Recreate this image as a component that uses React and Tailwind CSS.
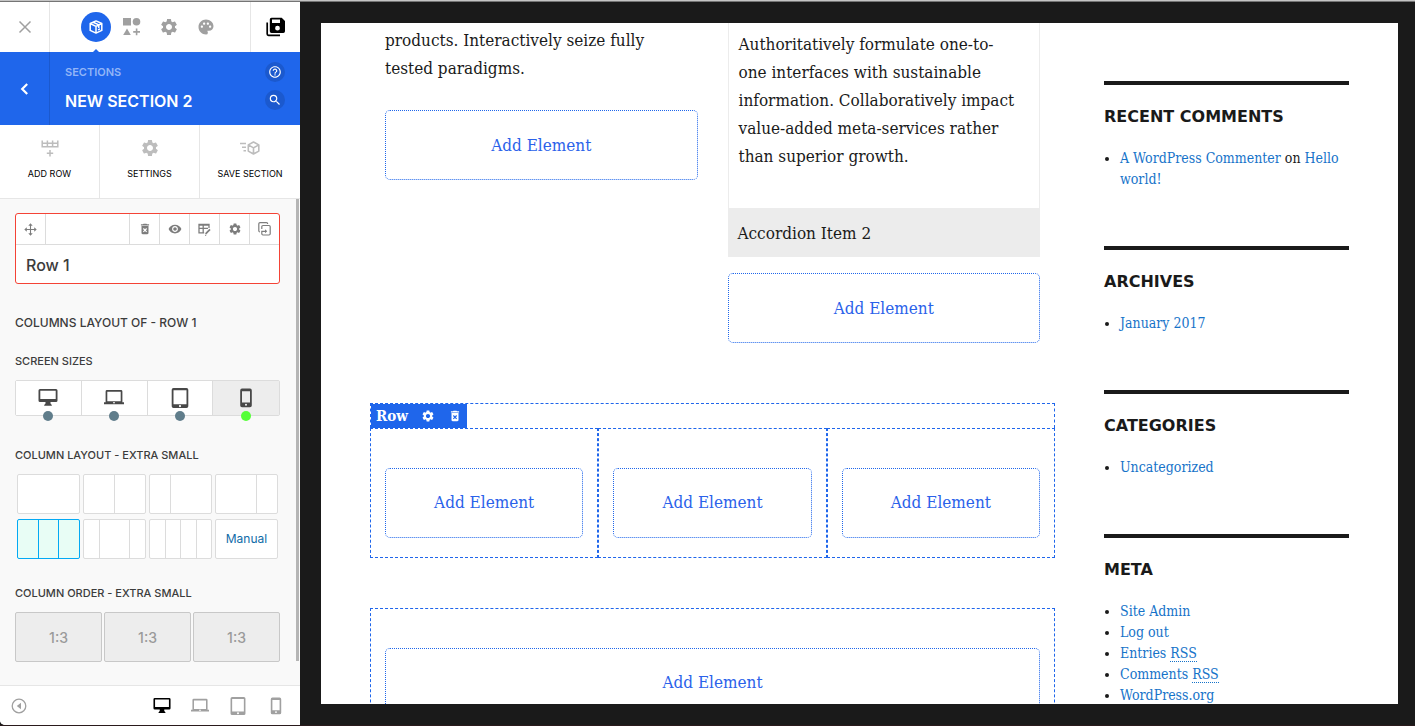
import React from "react";
import {
  MdSettings,
  MdPalette,
  MdDeleteForever,
  MdVisibility,
  MdHelpOutline,
  MdSearch,
} from "react-icons/md";

const serif = "font-['DejaVu_Serif_Condensed','DejaVu_Serif',serif]";

function CloseIcon() {
  return (
    <svg width="14" height="14" viewBox="0 0 14 14" fill="none" stroke="currentColor" strokeWidth="1.5" aria-hidden="true">
      <path d="M1.5 1.5l11 11M12.5 1.5l-11 11" />
    </svg>
  );
}

function CubeIcon() {
  return (
    <svg width="14" height="14" viewBox="0 0 14 14" fill="none" stroke="currentColor" strokeWidth="1.500" strokeLinejoin="round" aria-hidden="true">
      <path d="M7 .9l5.800 2.600v6.900L7 13.100 1.200 10.400V3.500zM1.200 3.500L7 6.400l5.800-2.900M7 6.400v6.700M4.200 2.200l5.600 2.700M9.800 4.900v3" />
      <path d="M9 9.800l2-1" />
    </svg>
  );
}

function ElementsIcon() {
  return (
    <svg width="18" height="18" viewBox="0 0 18 18" fill="currentColor" aria-hidden="true">
      <rect x="0" y="0" width="8" height="7.500" />
      <circle cx="13.500" cy="3.800" r="3.800" />
      <path d="M4 10.500L7.800 17H.2z" />
      <path d="M12.800 10.500h1.600v2.600H17v1.600h-2.600v2.600h-1.600v-2.600h-2.600v-1.600h2.600z" />
    </svg>
  );
}

function SaveAllIcon() {
  return (
    <svg width="20" height="20" viewBox="0 0 20 20" aria-hidden="true">
      <path d="M1.200 5.500V17a1.300 1.300 0 0 0 1.300 1.300H14" fill="none" stroke="currentColor" strokeWidth="1.700" />
      <path fillRule="evenodd" fill="currentColor" d="M5.500.7h10.200L19 4v10.200a1.700 1.700 0 0 1-1.700 1.700H5.500a1.700 1.700 0 0 1-1.700-1.700V2.400A1.700 1.700 0 0 1 5.500.7zM6 2.500v3.400h8V2.500zM11.500 8.800a2.400 2.400 0 1 0 0 4.800 2.400 2.400 0 0 0 0-4.800z" />
    </svg>
  );
}

function ChevronIcon() {
  return (
    <svg width="10" height="12" viewBox="0 0 10 12" fill="none" stroke="currentColor" strokeWidth="2.200" aria-hidden="true">
      <path d="M7.200 1L2.200 6l5 5" />
    </svg>
  );
}

function AddRowIcon() {
  return (
    <svg width="18" height="17" viewBox="0 0 18 17" fill="none" stroke="currentColor" strokeWidth="1.500" aria-hidden="true">
      <path d="M1.200.5v6.300h15.600V.5M1.200 3.300h15.600M6.400.5v6.300M11.600.5v6.300M9 10v6.500M5.800 13.200h6.400" />
    </svg>
  );
}

function SaveSectionIcon() {
  return (
    <svg width="20" height="14" viewBox="0 0 20 14" fill="none" stroke="currentColor" strokeWidth="1.600" aria-hidden="true">
      <path d="M0 2.500h6M2 6.200h4M3.500 9.800h2.500" />
      <path strokeLinejoin="round" d="M13.500 1l5.300 2.900v6.200L13.500 13l-5.200-2.900V3.900zM8.300 3.900l5.200 3 5.300-3M13.500 6.900V13" />
    </svg>
  );
}

function MoveIcon() {
  return (
    <svg width="13" height="13" viewBox="0 0 13 13" aria-hidden="true">
      <path d="M6.500 2v9M2 6.500h9" stroke="currentColor" strokeWidth="1.100" />
      <path d="M6.500.3l2.200 2.500H4.300zM6.500 12.700l2.200-2.500H4.300zM.3 6.500l2.500-2.200v4.400zM12.700 6.500l-2.500-2.200v4.400z" fill="currentColor" />
    </svg>
  );
}

function TableEditIcon() {
  return (
    <svg width="13" height="13" viewBox="0 0 13 13" fill="none" stroke="currentColor" strokeWidth="1.300" aria-hidden="true">
      <path d="M11 5V1.500H1v8.400h5.200M1 5.300h9M5.200 2v7.900M1 2.200h10" />
      <path d="M12 6.400l-4.400 4.500" strokeWidth="1.700" />
      <path d="M7 12.300h1.200" strokeWidth="1.100" />
    </svg>
  );
}

function CopyIcon() {
  return (
    <svg width="13" height="14" viewBox="0 0 13 14" fill="none" stroke="currentColor" strokeWidth="1.200" aria-hidden="true">
      <path d="M2 10a1.200 1.200 0 0 1-1.200-1.200V1.800A1.200 1.200 0 0 1 2 .7h6.500a1.200 1.200 0 0 1 1.200 1.200" />
      <path d="M3.800 7V4.700A1.200 1.200 0 0 1 5 3.500h6a1.200 1.200 0 0 1 1.200 1.200v7.100A1.200 1.200 0 0 1 11 13H5a1.200 1.200 0 0 1-1.200-1.200V9.300h4.400" />
      <path d="M7 7.300l2.200 2-2.200 2z" fill="currentColor" stroke="none" />
    </svg>
  );
}

function DesktopIcon({ size }) {
  return (
    <svg width={size} height={size} viewBox="0 0 20 20" fill="currentColor" aria-hidden="true">
      <path fillRule="evenodd" d="M2 1h16a1.500 1.500 0 0 1 1.500 1.500v10A1.500 1.500 0 0 1 18 14h-5.500v1.500l1.300 1.500v.8H6.200V17l1.300-1.500V14H2A1.500 1.500 0 0 1 .5 12.500v-10A1.500 1.500 0 0 1 2 1zM2.300 2.800v8.200h15.400V2.800z" />
    </svg>
  );
}

function LaptopIcon({ size }) {
  return (
    <svg width={size} height={size} viewBox="0 0 20 20" fill="currentColor" aria-hidden="true">
      <path fillRule="evenodd" d="M3 2h14a1.400 1.400 0 0 1 1.400 1.400v10.800H20v2H0v-2h1.600V3.400A1.400 1.400 0 0 1 3 2zM3.300 3.800v9.400h13.400V3.800zM9 14.300v1h2v-1z" />
    </svg>
  );
}

function TabletIcon({ size }) {
  return (
    <svg width={size} height={size} viewBox="0 0 20 20" fill="currentColor" aria-hidden="true">
      <path fillRule="evenodd" d="M3.500 0h13A1.800 1.800 0 0 1 18.300 1.800v16.400a1.800 1.800 0 0 1-1.800 1.800h-13a1.800 1.800 0 0 1-1.800-1.800V1.800A1.800 1.800 0 0 1 3.500 0zM3.500 2.200v14h13v-14zM10 17a1.100 1.100 0 1 0 0 2.200A1.100 1.100 0 0 0 10 17z" />
    </svg>
  );
}

function PhoneIcon({ size }) {
  return (
    <svg width={size} height={size} viewBox="0 0 20 20" fill="currentColor" aria-hidden="true">
      <path fillRule="evenodd" d="M6 .6h8a1.800 1.800 0 0 1 1.800 1.800v15a1.800 1.800 0 0 1-1.800 1.800H6a1.800 1.800 0 0 1-1.800-1.800v-15A1.800 1.800 0 0 1 6 .6zM6 3.300v11.300h8V3.300zM10 15.700a1 1 0 1 0 0 2.100 1 1 0 0 0 0-2.100z" />
    </svg>
  );
}

function CollapseIcon() {
  return (
    <svg width="16" height="16" viewBox="0 0 16 16" aria-hidden="true">
      <circle cx="8" cy="8" r="6.800" fill="none" stroke="currentColor" strokeWidth="1.300" />
      <path d="M10 4.800v6.400L5.800 8z" fill="currentColor" />
    </svg>
  );
}

const screens = [
  { name: "Desktop", Icon: DesktopIcon },
  { name: "Laptop", Icon: LaptopIcon },
  { name: "Tablet", Icon: TabletIcon },
  { name: "Phone", Icon: PhoneIcon },
];

const layouts = [
  { name: "One column", cells: [1] },
  { name: "Two columns", cells: [1, 1] },
  { name: "One third, two thirds", cells: [1, 2] },
  { name: "Two thirds, one third", cells: [2, 1] },
  { name: "Three columns", cells: [1, 1, 1], active: true },
  { name: "Quarter, half, quarter", cells: [1, 2, 1] },
  { name: "Four columns", cells: [1, 1, 1, 1] },
];

function SectionLabel({ children }) {
  return <h3 className="text-[11px] font-medium leading-4 text-[#3c3c3c]">{children}</h3>;
}

function TopBar() {
  return (
    <header className="flex h-[50px] shrink-0 items-stretch bg-white text-[#a0a0a0]">
      <button aria-label="Close" className="flex w-[50px] items-center justify-center border-r border-[#e6e6e6]">
        <CloseIcon />
      </button>
      <nav className="flex flex-1 items-center gap-3 pl-[31px]">
        <button aria-label="Sections" className="relative flex h-[30px] w-[30px] items-center justify-center rounded-full bg-[#1f66eb] text-white">
          <CubeIcon />
          <span className="absolute left-[12px] top-[37px] h-0 w-0 border-x-[3px] border-b-[3px] border-x-transparent border-b-[#1f66eb]" />
        </button>
        <div className="flex items-center gap-[18px]">
          <button aria-label="Elements"><ElementsIcon /></button>
          <button aria-label="Settings"><MdSettings size={20} /></button>
          <button aria-label="Styles"><MdPalette size={18} /></button>
        </div>
      </nav>
      <button aria-label="Save" className="flex w-[50px] items-center justify-center border-l border-[#e6e6e6] text-black">
        <SaveAllIcon />
      </button>
    </header>
  );
}

function TitleBar() {
  return (
    <div className="flex h-[73px] shrink-0 bg-[#1f66eb] text-white">
      <button aria-label="Back" className="flex w-[50px] items-center justify-center border-r border-[#1b59ce]">
        <ChevronIcon />
      </button>
      <div className="flex flex-1 flex-col pl-[15px] pt-3">
        <p className="text-[11px] font-semibold leading-4 text-[#93b5f7]">SECTIONS</p>
        <h2 className="mt-[9px] text-[16px] font-semibold leading-6">NEW SECTION 2</h2>
      </div>
      <div className="flex w-[50px] flex-col items-center gap-2 pt-[10px]">
        <button aria-label="Help" className="flex h-5 w-5 items-center justify-center rounded-full bg-[#1b59ce]">
          <MdHelpOutline size={14} />
        </button>
        <button aria-label="Search" className="flex h-5 w-5 items-center justify-center rounded-full bg-[#1b59ce]">
          <MdSearch size={14} />
        </button>
      </div>
    </div>
  );
}

function Actions() {
  const items = [
    { name: "ADD ROW", icon: <AddRowIcon /> },
    { name: "SETTINGS", icon: <MdSettings size={20} /> },
    { name: "SAVE SECTION", icon: <SaveSectionIcon /> },
  ];
  return (
    <div className="grid h-[74px] shrink-0 grid-cols-3 divide-x divide-[#e6e6e6] border-b border-[#e6e6e6] bg-white">
      {items.map((item) => (
        <button key={item.name} className="flex flex-col items-center pt-[13px] text-[#bdbdbd]">
          <span className="flex h-5 items-center">{item.icon}</span>
          <span className="mt-2 whitespace-nowrap text-[9px] leading-4 text-black">{item.name}</span>
        </button>
      ))}
    </div>
  );
}

function RowCard() {
  const tools = [
    { name: "Delete row", icon: <MdDeleteForever size={14} /> },
    { name: "Toggle visibility", icon: <MdVisibility size={14} /> },
    { name: "Edit layout", icon: <TableEditIcon /> },
    { name: "Row settings", icon: <MdSettings size={14} /> },
    { name: "Duplicate row", icon: <CopyIcon /> },
  ];
  return (
    <div className="overflow-hidden rounded-[3px] border border-[#f44336] bg-white text-[#7d7d7d]">
      <div className="flex h-[31px] items-stretch border-b border-[#dcdcdc]">
        <button aria-label="Move row" className="flex w-[30px] items-center justify-center border-r border-[#dcdcdc]">
          <MoveIcon />
        </button>
        <div className="flex-1" />
        {tools.map((tool) => (
          <button key={tool.name} aria-label={tool.name} className="flex w-[30px] items-center justify-center border-l border-[#dcdcdc]">
            {tool.icon}
          </button>
        ))}
      </div>
      <p className="px-[10px] pb-[6px] pt-2 text-[16px] font-medium leading-6 text-[#3c3c3c]">Row 1</p>
    </div>
  );
}

function ScreenSizes() {
  return (
    <div className="mt-[11px] grid h-9 grid-cols-4 divide-x divide-[#dcdcdc] rounded-[2px] border border-[#dcdcdc] text-[#484848]">
      {screens.map(({ name, Icon }) => (
        <button
          key={name}
          aria-label={name}
          aria-pressed={name === "Phone"}
          className={`relative flex items-center justify-center ${name === "Phone" ? "bg-[#ededed]" : "bg-white"}`}
        >
          <Icon size={20} />
          <span
            className={`absolute -bottom-[6px] left-1/2 h-[10px] w-[10px] -translate-x-1/2 rounded-full ${
              name === "Phone" ? "bg-[#55ff38]" : "bg-[#607d8b]"
            }`}
          />
        </button>
      ))}
    </div>
  );
}

function LayoutGrid() {
  return (
    <div className="mt-[11px] grid auto-rows-[40px] grid-cols-4 gap-x-[3px] gap-y-[5px] px-[2px]">
      {layouts.map((layout) => (
        <button
          key={layout.name}
          aria-label={layout.name}
          aria-pressed={!!layout.active}
          className={`flex items-stretch rounded-[2px] border ${
            layout.active
              ? "divide-x divide-[#03a9f4] border-[#03a9f4] bg-[#e8fdf5]"
              : "divide-x divide-[#dcdcdc] border-[#dcdcdc] bg-white"
          }`}
        >
          {layout.cells.map((grow, i) => (
            <span key={i} className="basis-0" style={{ flexGrow: grow }} />
          ))}
        </button>
      ))}
      <button className="rounded-[2px] border border-[#dcdcdc] bg-white text-[12px] text-[#0f6ba8]">Manual</button>
    </div>
  );
}

function Footer() {
  return (
    <footer className="flex h-10 shrink-0 items-center border-t border-[#e6e6e6] bg-white pl-[11px] pr-[15px] text-[#a0a0a0]">
      <button aria-label="Collapse panel"><CollapseIcon /></button>
      <div className="ml-auto flex items-center gap-5">
        <button aria-label="Desktop preview" className="text-black"><DesktopIcon size={18} /></button>
        <button aria-label="Laptop preview"><LaptopIcon size={18} /></button>
        <button aria-label="Tablet preview"><TabletIcon size={18} /></button>
        <button aria-label="Phone preview"><PhoneIcon size={18} /></button>
      </div>
    </footer>
  );
}

function Panel() {
  return (
    <div className="flex w-[300px] shrink-0 flex-col overflow-hidden rounded-bl-[5px] bg-white font-['Inter',sans-serif]">
      <TopBar />
      <TitleBar />
      <Actions />
      <div className="flex min-h-0 flex-1 bg-[#f9f9f9]">
        <div className="min-w-0 flex-1 overflow-hidden pl-[15px] pr-4 pt-[14px]">
          <RowCard />
          <h2 className="mt-[31px] text-[12px] font-medium leading-4 text-[#3c3c3c]">COLUMNS LAYOUT OF - ROW 1</h2>
          <div className="mt-[22px]">
            <SectionLabel>SCREEN SIZES</SectionLabel>
            <ScreenSizes />
          </div>
          <div className="mt-[31px]">
            <SectionLabel>COLUMN LAYOUT - EXTRA SMALL</SectionLabel>
            <LayoutGrid />
          </div>
          <div className="mt-[26px]">
            <SectionLabel>COLUMN ORDER - EXTRA SMALL</SectionLabel>
            <div className="mt-[11px] grid grid-cols-3 gap-[2px]">
              {[0, 1, 2].map((i) => (
                <button key={i} className="h-[50px] rounded-[2px] border border-[#c8c8c8] bg-[#ededed] text-[14px] font-medium text-[#9a9a9a]">
                  1:3
                </button>
              ))}
            </div>
          </div>
        </div>
        <div className="mb-6 mr-px w-[3px] bg-[#b5b5b5]" />
      </div>
      <Footer />
    </div>
  );
}

function AddElement() {
  return (
    <button className="block h-[70px] w-full rounded-[5px] border border-dotted border-[#1f66eb] text-[17px] text-[#2b62ea]">
      Add Element
    </button>
  );
}

function Widget({ title, children }) {
  return (
    <section className="mb-14 border-t-4 border-[#1a1a1a] pt-[22px]">
      <h2 className="mb-[21px] font-['DejaVu_Sans',sans-serif] text-[16px] font-bold leading-5">{title}</h2>
      <ul className="list-disc pl-4 text-[14px] leading-[21px] marker:text-[#1a1a1a]">{children}</ul>
    </section>
  );
}

function WidgetLink({ children }) {
  return <a href="#" className="text-[#1673c9]">{children}</a>;
}

function Preview() {
  return (
    <div className={`flex min-h-0 flex-1 overflow-hidden bg-white px-[49px] text-[#1a1a1a] ${serif}`}>
      <main className="min-w-0 flex-1">
        <div className="grid grid-cols-2 items-start gap-[30px] px-[15px] text-[17px] leading-7">
          <div className="pt-[3px]">
            <p className="mb-7 pr-5">products. Interactively seize fully tested paradigms.</p>
            <AddElement />
          </div>
          <div>
            <div className="border-x border-[#ececec] pb-[38px] pl-[10px] pr-5 pt-[7px]">
              Authoritatively formulate one-to-one interfaces with sustainable information. Collaboratively impact value-added meta-services rather than superior growth.
            </div>
            <button className="mb-4 block h-[49px] w-full bg-[#ececec] px-[10px] text-left">Accordion Item 2</button>
            <AddElement />
          </div>
        </div>

        <section className="mt-[60px]">
          <div className="flex h-[25px] border-x border-t border-dashed border-[#1f66eb]">
            <div className="flex items-center bg-[#1f66eb] px-[5px] text-[15px] font-bold leading-6 text-white">
              Row
              <button aria-label="Row settings" className="ml-[13px]"><MdSettings size={14} /></button>
              <button aria-label="Delete row" className="ml-[13px]"><MdDeleteForever size={14} /></button>
            </div>
          </div>
          <div className="grid grid-cols-3">
            {[0, 1, 2].map((i) => (
              <div key={i} className="border border-dashed border-[#1f66eb] px-[14px] pb-[19px] pt-[39px]">
                <AddElement />
              </div>
            ))}
          </div>
        </section>

        <section className="mt-[50px] border border-dashed border-[#1f66eb] px-[14px] pb-[19px] pt-[39px]">
          <AddElement />
        </section>
      </main>

      <aside className="ml-[49px] w-[245px] shrink-0 pt-[58px]">
        <Widget title="RECENT COMMENTS">
          <li><WidgetLink>A WordPress Commenter</WidgetLink> on <WidgetLink>Hello world!</WidgetLink></li>
        </Widget>
        <Widget title="ARCHIVES">
          <li><WidgetLink>January 2017</WidgetLink></li>
        </Widget>
        <Widget title="CATEGORIES">
          <li><WidgetLink>Uncategorized</WidgetLink></li>
        </Widget>
        <Widget title="META">
          <li><WidgetLink>Site Admin</WidgetLink></li>
          <li><WidgetLink>Log out</WidgetLink></li>
          <li><WidgetLink>Entries <abbr className="border-b border-dotted border-[#1673c9] no-underline">RSS</abbr></WidgetLink></li>
          <li><WidgetLink>Comments <abbr className="border-b border-dotted border-[#1673c9] no-underline">RSS</abbr></WidgetLink></li>
          <li><WidgetLink>WordPress.org</WidgetLink></li>
        </Widget>
      </aside>
    </div>
  );
}

export default function App() {
  return (
    <div className="flex h-screen border-b border-[#2a1a1c] bg-[#1a1a1a]">
      <div className="flex min-w-0 flex-1 flex-col">
        <div className="h-[2px] shrink-0 border-b border-[#757575] bg-[#c4c4c4]" />
        <div className="flex min-h-0 flex-1">
          <Panel />
          <div className="flex min-w-0 flex-1 flex-col pb-[21px] pl-[21px] pr-[17px] pt-[21px]">
            <Preview />
          </div>
        </div>
      </div>
    </div>
  );
}
